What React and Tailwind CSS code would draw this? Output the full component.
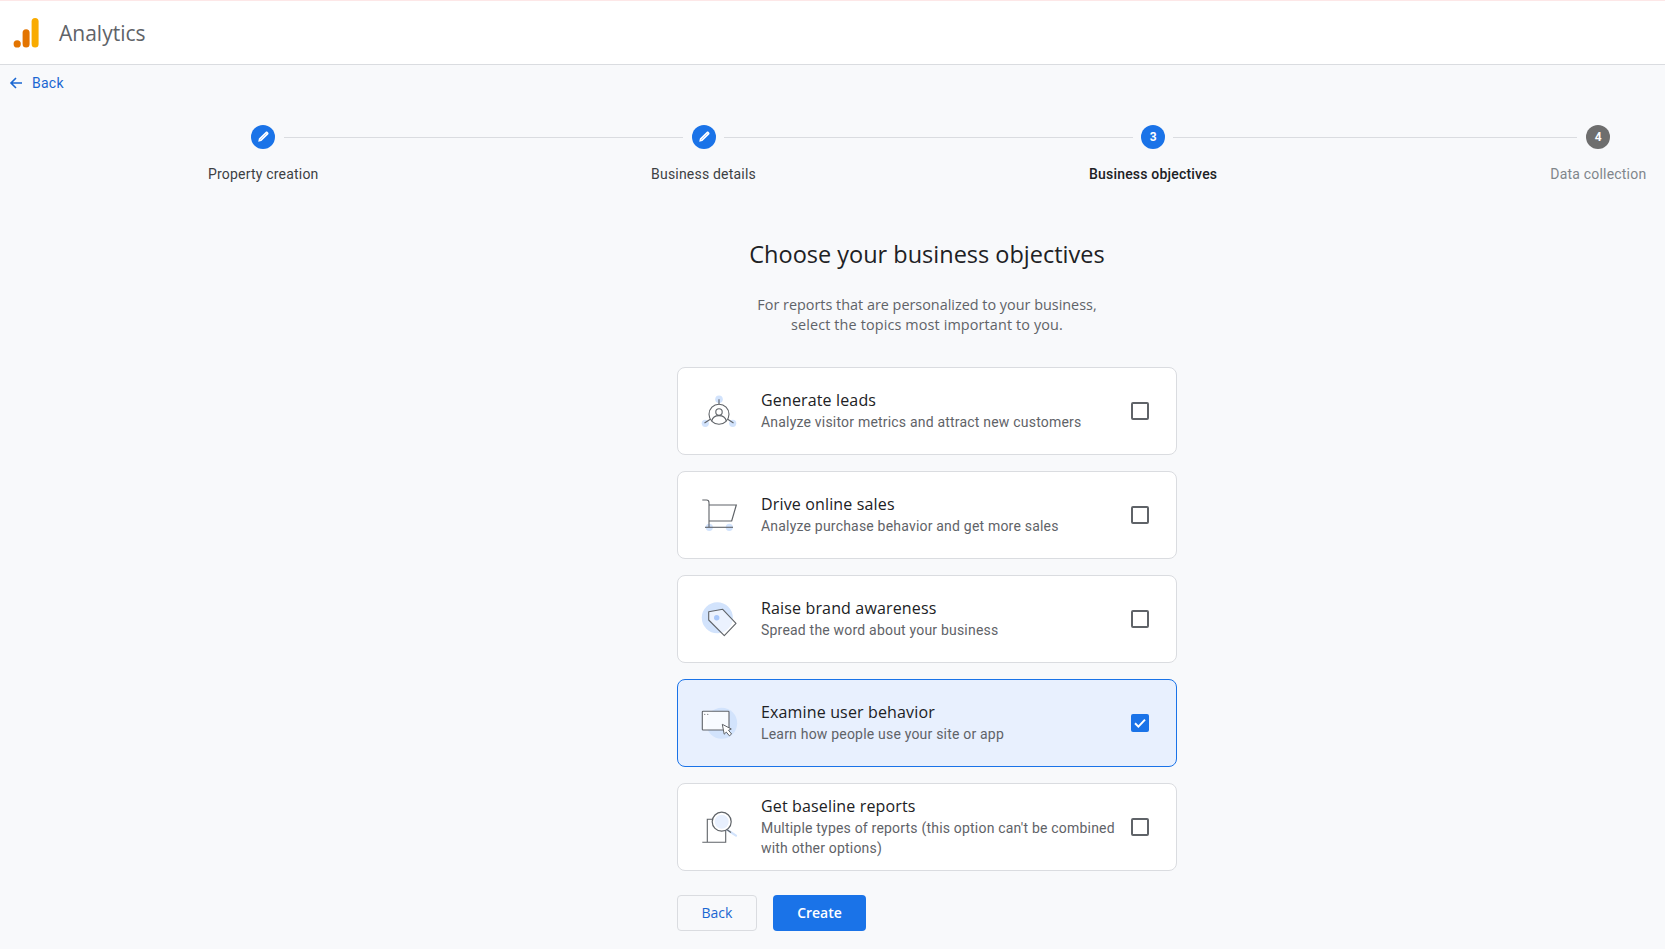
import React from "react";

const GS = "font-['Open_Sans','Noto_Sans',sans-serif]";
const R = "font-['Roboto','Liberation_Sans',sans-serif]";
const DARK = "#5f6368";
const SOFT = "#d2e3fc";

function Logo() {
  return (
    <svg width="28" height="34" viewBox="0 0 28 34" className="block">
      <circle cx="6.2" cy="27.9" r="3.6" fill="#e37400" />
      <rect x="11.6" y="13.3" width="7" height="18.2" rx="3.5" fill="#e37400" />
      <rect x="20.6" y="2" width="7" height="29.5" rx="3.5" fill="#f9ab00" />
    </svg>
  );
}

function Pen() {
  return (
    <svg width="16" height="16" viewBox="0 0 16 16" fill="none">
      <path d="M3.2 12.8 3.9 9.6 10.6 2.9C11.2 2.3 12 2.3 12.6 2.9L13.1 3.4C13.7 4 13.7 4.8 13.1 5.4L6.4 12.1Z" fill="#fff" />
      <path d="M5.2 10.8 11.4 4.6" stroke="#a8c7fa" strokeWidth="0.9" />
    </svg>
  );
}

function LeadsIcon() {
  return (
    <svg width="40" height="40" viewBox="0 0 40 40" fill="none">
      <circle cx="20" cy="8.3" r="3.8" fill={SOFT} />
      <circle cx="6.3" cy="32.3" r="3.6" fill={SOFT} />
      <circle cx="33.7" cy="32.3" r="3.6" fill={SOFT} />
      <g stroke={DARK} strokeWidth="1.1">
        <circle cx="20" cy="23.3" r="10" />
        <circle cx="20" cy="21" r="3.2" />
        <path d="M12.7 30c.8-3.4 3.8-5.4 7.3-5.4s6.5 2 7.3 5.4" />
        <path d="M20 8.3V13.3M11.3 28.3 5.5 32M28.7 28.3 34.5 32" />
      </g>
    </svg>
  );
}

function CartIcon() {
  return (
    <svg width="40" height="40" viewBox="0 0 40 40" fill="none">
      <circle cx="10.3" cy="32.3" r="3.6" fill={SOFT} />
      <circle cx="30.3" cy="32.3" r="3.6" fill={SOFT} />
      <g stroke={DARK} strokeWidth="1.1">
        <path d="M3.3 5H7.5C9 5 10 6.2 10 7.7V32.3" />
        <path d="M10 10H37.3L32.7 26H10" strokeWidth="1.2" />
        <path d="M6 32.3H34" />
      </g>
    </svg>
  );
}

function TagIcon() {
  return (
    <svg width="40" height="40" viewBox="0 0 40 40" fill="none">
      <circle cx="18.3" cy="18.7" r="15.5" fill={SOFT} />
      <path d="M9.7 12.7 23.7 10.3 37 24.3 25.3 36.7 9.7 21Z" fill="#fff" fillOpacity="0.55" stroke={DARK} strokeWidth="1.1" strokeLinejoin="round" />
      <circle cx="17.7" cy="18.7" r="2.7" fill="#a8c7fa" />
    </svg>
  );
}

function WindowIcon() {
  return (
    <svg width="40" height="40" viewBox="0 0 40 40" fill="none">
      <circle cx="22.7" cy="20.3" r="15.5" fill={SOFT} />
      <rect x="3.3" y="8.3" width="26.7" height="18.7" rx="0.8" fill="#fff" fillOpacity="0.85" stroke={DARK} strokeWidth="1.1" />
      <circle cx="5.8" cy="11.3" r="0.6" fill={DARK} />
      <circle cx="8.8" cy="11.3" r="0.6" fill={DARK} />
      <path d="M23.3 21.3 25.2 31.2 27.3 29.1 30.4 32.8 32.6 31 29.5 27.3 32.3 26Z" fill="#fff" stroke={DARK} strokeWidth="1" strokeLinejoin="round" />
    </svg>
  );
}

function SearchDocIcon() {
  return (
    <svg width="40" height="40" viewBox="0 0 40 40" fill="none">
      <path d="M8.3 35.3V12.3H26.7V35.3ZM3.3 35.3H16" stroke={DARK} strokeWidth="1.1" />
      <path d="M27.7 22.5 37 28.7" stroke={SOFT} strokeWidth="2.2" strokeLinecap="round" />
      <path d="M27.7 22.5 32 25.4" stroke={DARK} strokeWidth="1.2" />
      <circle cx="22.7" cy="14.7" r="9.5" fill="#fff" stroke={DARK} strokeWidth="1.2" />
      <circle cx="22.7" cy="14.7" r="7" fill="#e8f0fe" />
    </svg>
  );
}

function Checkbox({ checked }) {
  if (checked) {
    return (
      <div className="w-[18px] h-[18px] rounded-[2px] bg-[#1a73e8] flex items-center justify-center shrink-0">
        <svg width="14" height="14" viewBox="0 0 14 14" fill="none">
          <path d="M2 7.2 5.4 10.6 12 3.6" stroke="#fff" strokeWidth="2" />
        </svg>
      </div>
    );
  }
  return <div className="w-[18px] h-[18px] rounded-[2px] border-2 border-[#5f6368] bg-white shrink-0" />;
}

const OBJECTIVES = [
  { title: "Generate leads", desc: ["Analyze visitor metrics and attract new customers"], Icon: LeadsIcon },
  { title: "Drive online sales", desc: ["Analyze purchase behavior and get more sales"], Icon: CartIcon },
  { title: "Raise brand awareness", desc: ["Spread the word about your business"], Icon: TagIcon },
  { title: "Examine user behavior", desc: ["Learn how people use your site or app"], Icon: WindowIcon, checked: true },
  { title: "Get baseline reports", desc: ["Multiple types of reports (this option can't be combined", "with other options)"], Icon: SearchDocIcon },
];

function Card({ title, desc, Icon, checked }) {
  return (
    <div
      className={
        "h-[88px] rounded-lg border flex items-center pl-[21px] pr-[27px] " +
        (checked ? "bg-[#e8f0fe] border-[#1a73e8]" : "bg-white border-[#dadce0]")
      }
    >
      <div className="w-[40px] h-[40px] shrink-0">
        <Icon />
      </div>
      <div className="ml-[22px] flex-1 min-w-0">
        <div className={GS + " text-[16px] leading-[20px] mb-[2px] tracking-[0.15px] font-medium text-[#202124]"}>{title}</div>
        <div className={R + " text-[14px] leading-[20px] text-[#5f6368] tracking-[0.2px]"}>
          {desc.map((d) => (
            <div key={d}>{d}</div>
          ))}
        </div>
      </div>
      <Checkbox checked={checked} />
    </div>
  );
}

function Step({ label, icon, number, state }) {
  return (
    <div className="flex flex-col items-center shrink-0">
      <div
        className={
          "w-6 h-6 rounded-full flex items-center justify-center text-white text-[12px] font-bold " +
          (state === "todo" ? "bg-[#6e6e6e]" : "bg-[#1a73e8]")
        }
      >
        {icon ? <Pen /> : number}
      </div>
      <div
        className={
          "mt-[15px] text-[14px] leading-[20px] tracking-[0.2px] " +
          (state === "active" ? "font-medium text-[#202124]" : state === "todo" ? "text-[#80868b]" : "text-[#3c4043]")
        }
      >
        {label}
      </div>
    </div>
  );
}

function Connector({ className }) {
  return <div className={"shrink-0 h-px mt-[12px] bg-[#dadce0] " + className} />;
}

export default function App() {
  return (
    <div className={R + " min-h-[949px] bg-[#f8f9fb] box-border"}>
      <header className="h-[65px] bg-white border-t border-t-[#fde7e7] border-b border-b-[#dadce0] flex items-center pl-[11px]">
        <Logo />
        <span className={GS + " ml-[20px] pt-[2px] text-[21px] text-[#5f6368]"}>Analytics</span>
      </header>

      <div className="h-[36px] flex items-center pl-[9px] text-[#1a67d2] text-[14px]">
        <svg width="14" height="14" viewBox="0 0 14 14" fill="none" stroke="#1a67d2" strokeWidth="1.6">
          <path d="M13 7H2M7 2 2 7l5 5" />
        </svg>
        <span className="ml-[9px] tracking-[0.25px]">Back</span>
      </div>

      <div className="mt-[24px] flex pl-[208px]">
        <Step label="Property creation" icon state="done" />
        <Connector className="w-[399.5px] -ml-[35px] -mr-[32px]" />
        <Step label="Business details" icon state="done" />
        <Connector className="w-[409px] -ml-[32px] -mr-[44px]" />
        <Step label="Business objectives" number="3" state="active" />
        <Connector className="w-[404px] -ml-[44px] -mr-[27px]" />
        <Step label="Data collection" number="4" state="todo" />
      </div>

      <main className="ml-[677px] w-[500px] mt-[54px]">
        <h1 className={GS + " text-[23.5px] leading-[32px] text-center text-[#202124]"}>Choose your business objectives</h1>
        <p className={GS + " mt-[25px] text-[14.4px] leading-[20px] text-center font-medium text-[#5f6368]"}>
          For reports that are personalized to your business,
          <br />
          <span className="tracking-[0.13px]">select the topics most important to you.</span>
        </p>

        <div className="mt-[32px] flex flex-col gap-4">
          {OBJECTIVES.map((o) => (
            <Card key={o.title} {...o} />
          ))}
        </div>

        <div className="mt-[24px] flex gap-4">
          <button className={GS + " w-[80px] h-[36px] pb-[1px] rounded border border-[#dadce0] text-[14px] font-medium text-[#1a67d2]"}>Back</button>
          <button className={GS + " w-[93px] h-[36px] pb-[1px] rounded bg-[#1a73e8] text-[14px] font-semibold text-white"}>Create</button>
        </div>
      </main>
    </div>
  );
}
